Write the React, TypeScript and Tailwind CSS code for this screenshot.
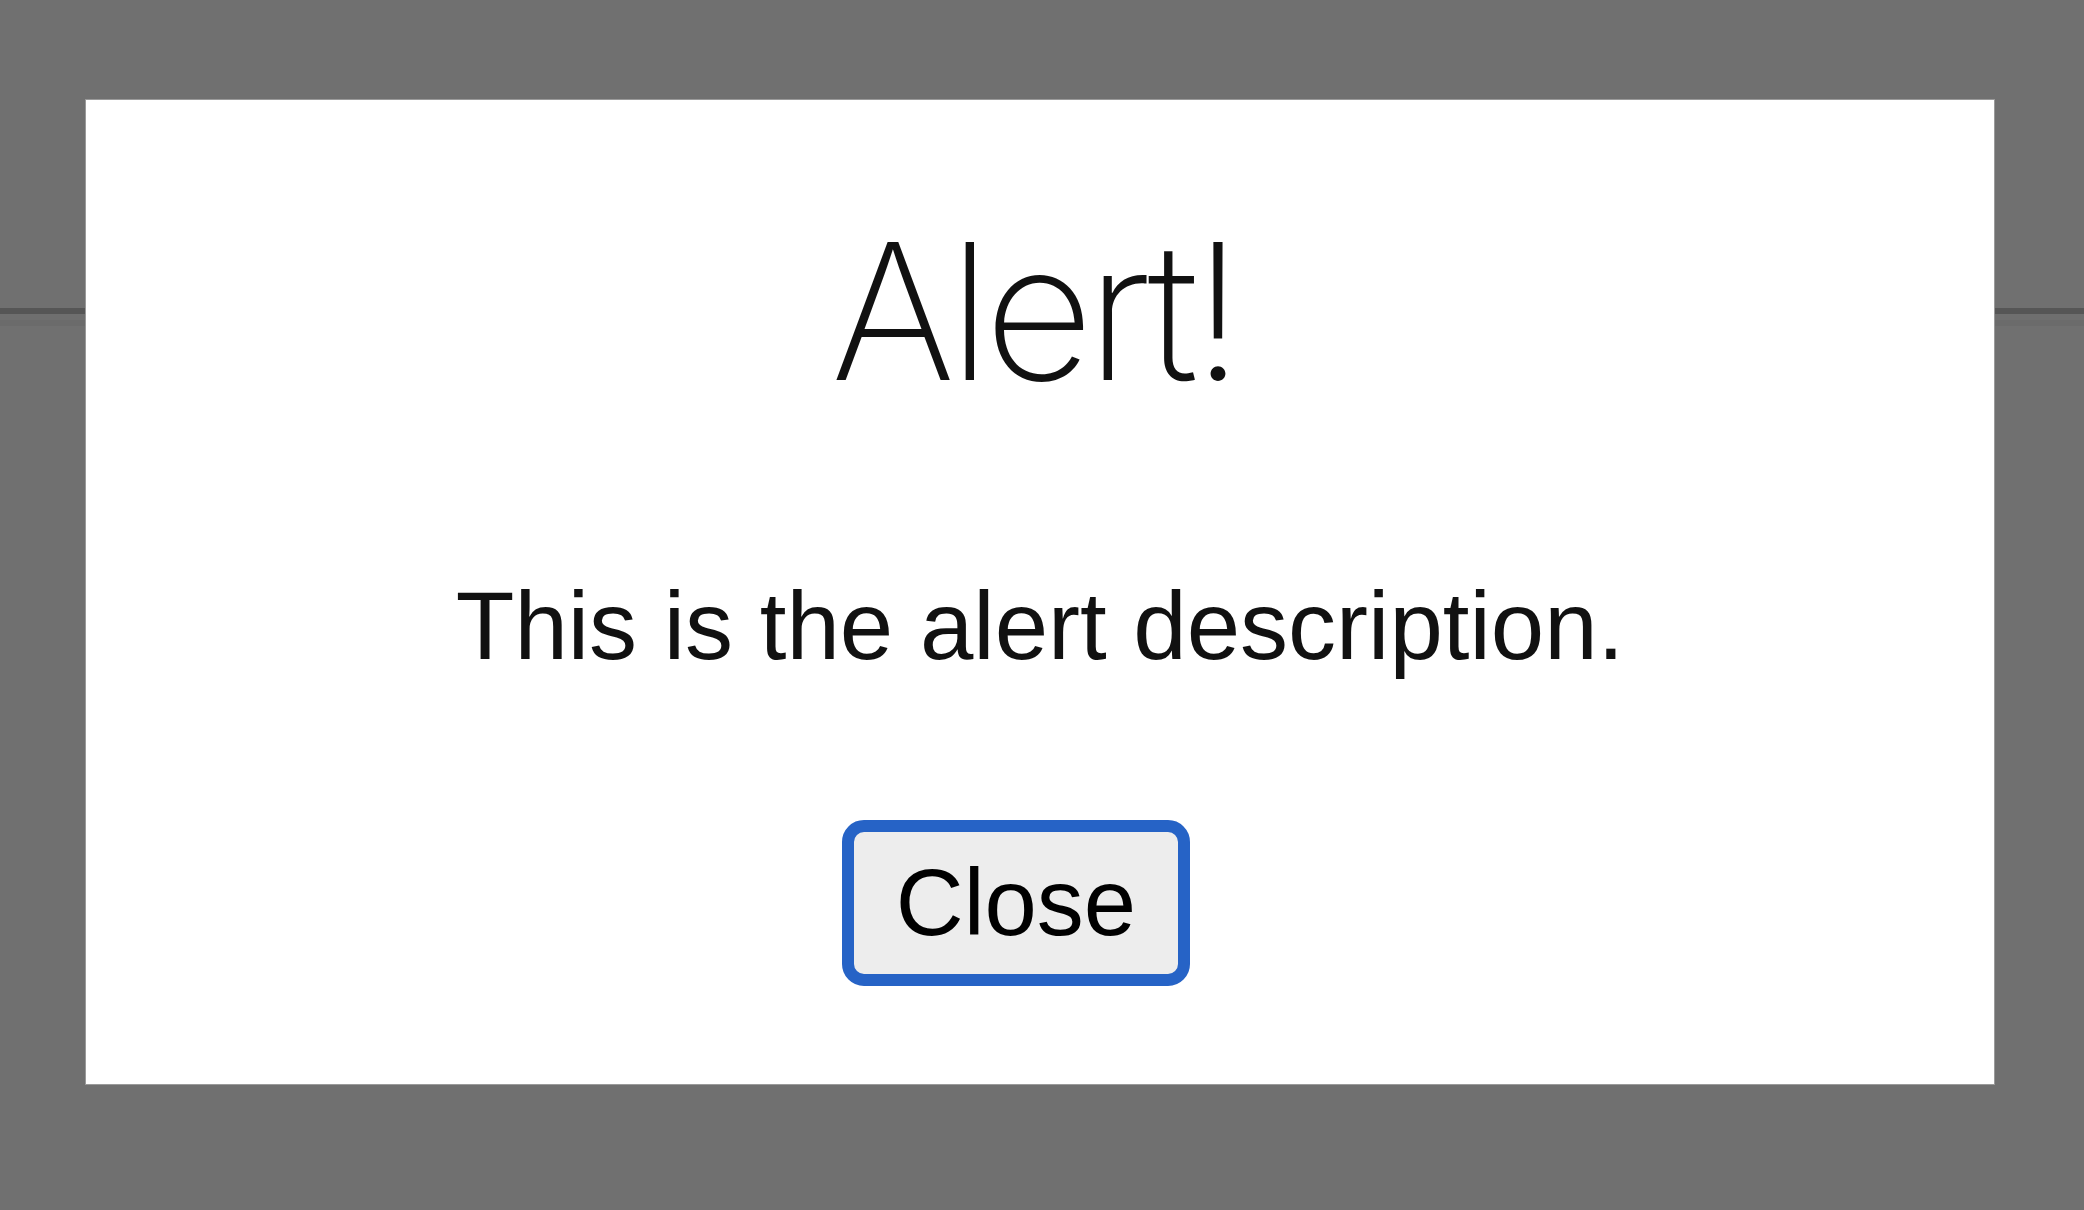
import React from "react";

const App = () => {
  return (
    <div className="relative w-[2084px] h-[1210px] overflow-hidden bg-[#707070]">
      {/* page behind the overlay */}
      <div className="h-[308px]" />
      <div className="h-[6px] bg-[#565656]" />
      <div className="h-[6px] bg-[#6f6f6f]" />
      <div className="h-[6px] bg-[#6b6b6b]" />

      <div
        role="alertdialog"
        className="absolute left-[85px] top-[99px] w-[1910px] h-[986px] bg-white border border-[#9a9a9a] flex flex-col items-center"
      >
        <h1 className="mt-[116px] mr-[12px] text-[190px] leading-[1] font-extralight text-[#111] font-['Inter',sans-serif] tracking-[-7px]">
          Alert!
        </h1>
        <p className="mt-[172px] text-[96px] leading-[1] text-[#111] font-['Liberation_Sans',Arial,sans-serif]">
          This is the alert description.
        </p>
        <button className="mt-[146px] mr-[48px] px-[42px] py-[17px] bg-[#ededed] border-[12px] border-[#2663c6] rounded-[22px] text-[94px] leading-[1.15] text-black font-['Liberation_Sans',Arial,sans-serif]">
          Close
        </button>
      </div>
    </div>
  );
};

export default App;
